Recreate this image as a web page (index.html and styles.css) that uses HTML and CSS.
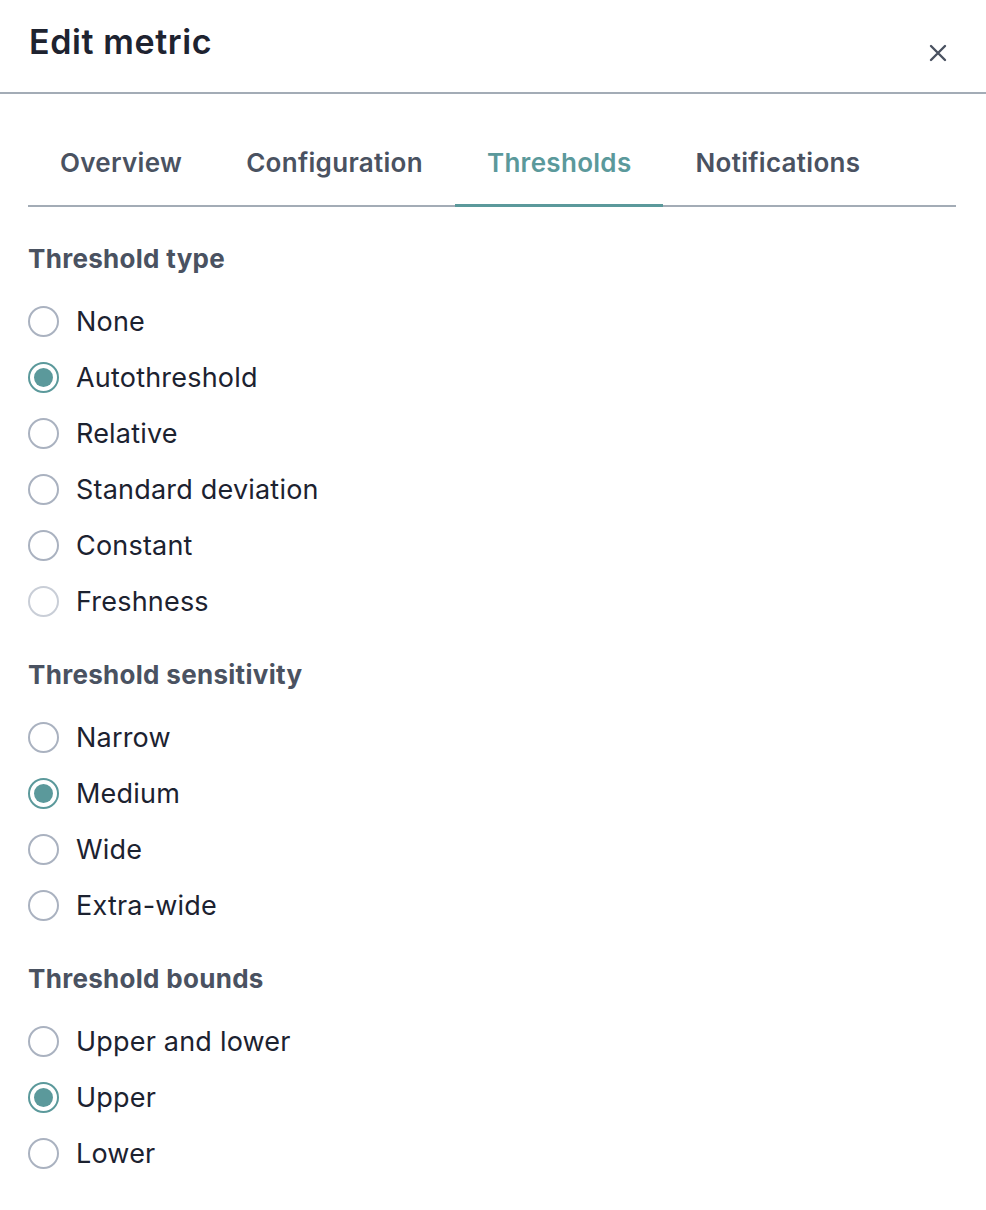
FILE: index.html
```html
<!DOCTYPE html>
<html>
<head>
<meta charset="utf-8">
<link rel="stylesheet" href="styles.css">
</head>
<body>
<div class="panel">
  <header class="header">
    <h1 class="title">Edit metric</h1>
    <button class="close" aria-label="Close">
      <svg width="18" height="18" viewBox="0 0 18 18"><path d="M2 2 L16 16 M16 2 L2 16" stroke="#4a5261" stroke-width="2.4" stroke-linecap="round"/></svg>
    </button>
  </header>
  <div class="content">
    <nav class="tabs">
      <div class="tab">Overview</div>
      <div class="tab">Configuration</div>
      <div class="tab active">Thresholds</div>
      <div class="tab">Notifications</div>
    </nav>

    <section class="section first">
      <h2 class="heading">Threshold type</h2>
      <div class="radio"><span class="dot"></span>None</div>
      <div class="radio checked"><span class="dot"></span>Autothreshold</div>
      <div class="radio"><span class="dot"></span>Relative</div>
      <div class="radio"><span class="dot"></span>Standard deviation</div>
      <div class="radio"><span class="dot"></span>Constant</div>
      <div class="radio disabled"><span class="dot"></span>Freshness</div>
    </section>

    <section class="section">
      <h2 class="heading">Threshold sensitivity</h2>
      <div class="radio"><span class="dot"></span>Narrow</div>
      <div class="radio checked"><span class="dot"></span>Medium</div>
      <div class="radio"><span class="dot"></span>Wide</div>
      <div class="radio"><span class="dot"></span>Extra-wide</div>
    </section>

    <section class="section">
      <h2 class="heading">Threshold bounds</h2>
      <div class="radio"><span class="dot"></span>Upper and lower</div>
      <div class="radio checked"><span class="dot"></span>Upper</div>
      <div class="radio"><span class="dot"></span>Lower</div>
    </section>
  </div>
</div>
</body>
</html>
```

FILE: styles.css
```css
* { box-sizing: border-box; }
html, body {
  margin: 0;
  padding: 0;
  background: #ffffff;
  font-family: Inter, "Noto Sans", "Liberation Sans", sans-serif;
}
.panel {
  width: 986px;
}
.header {
  height: 94px;
  border-bottom: 2px solid #a3acb6;
  display: flex;
  align-items: flex-start;
  justify-content: space-between;
  padding: 0 39px 0 29px;
}
.title {
  margin: 0;
  margin-top: 22px;
  font-size: 34px;
  line-height: 40px;
  font-weight: 600;
  color: #1e2330;
  letter-spacing: 0.6px;
}
.close {
  margin-top: 44px;
  width: 18px;
  height: 18px;
  padding: 0;
  border: 0;
  background: none;
  display: flex;
}
.content {
  padding: 0 30px 0 28px;
}
.tabs {
  margin-top: 26px;
  display: flex;
  border-bottom: 2px solid #a3acb6;
}
.tab {
  padding: 26px 32px 24px;
  line-height: 34px;
  font-size: 26px;
  font-weight: 600;
  letter-spacing: 0.3px;
  color: #4a5261;
  border-bottom: 3px solid transparent;
  margin-bottom: -2px;
}
.tab.active {
  color: #5b999b;
  border-bottom-color: #5b999b;
}
.section {
  margin-top: 30px;
}
.section.first {
  margin-top: 36px;
}
.heading {
  margin: 0 0 18px;
  font-size: 26px;
  line-height: 32px;
  font-weight: 700;
  letter-spacing: 0.3px;
  color: #4a5261;
}
.radio {
  height: 56px;
  display: flex;
  align-items: center;
  font-size: 27px;
  letter-spacing: 0.2px;
  color: #1c2230;
}
.dot {
  width: 31px;
  height: 31px;
  border: 2px solid #aab2c0;
  border-radius: 50%;
  margin: 0 17px 0 0;
  display: flex;
  align-items: center;
  justify-content: center;
  flex-shrink: 0;
}
.radio.checked .dot {
  border-color: #5b999b;
}
.radio.checked .dot::after {
  content: "";
  width: 19px;
  height: 19px;
  border-radius: 50%;
  background: #5b999b;
}
.radio.disabled .dot {
  border-color: #c9ced7;
}
```
